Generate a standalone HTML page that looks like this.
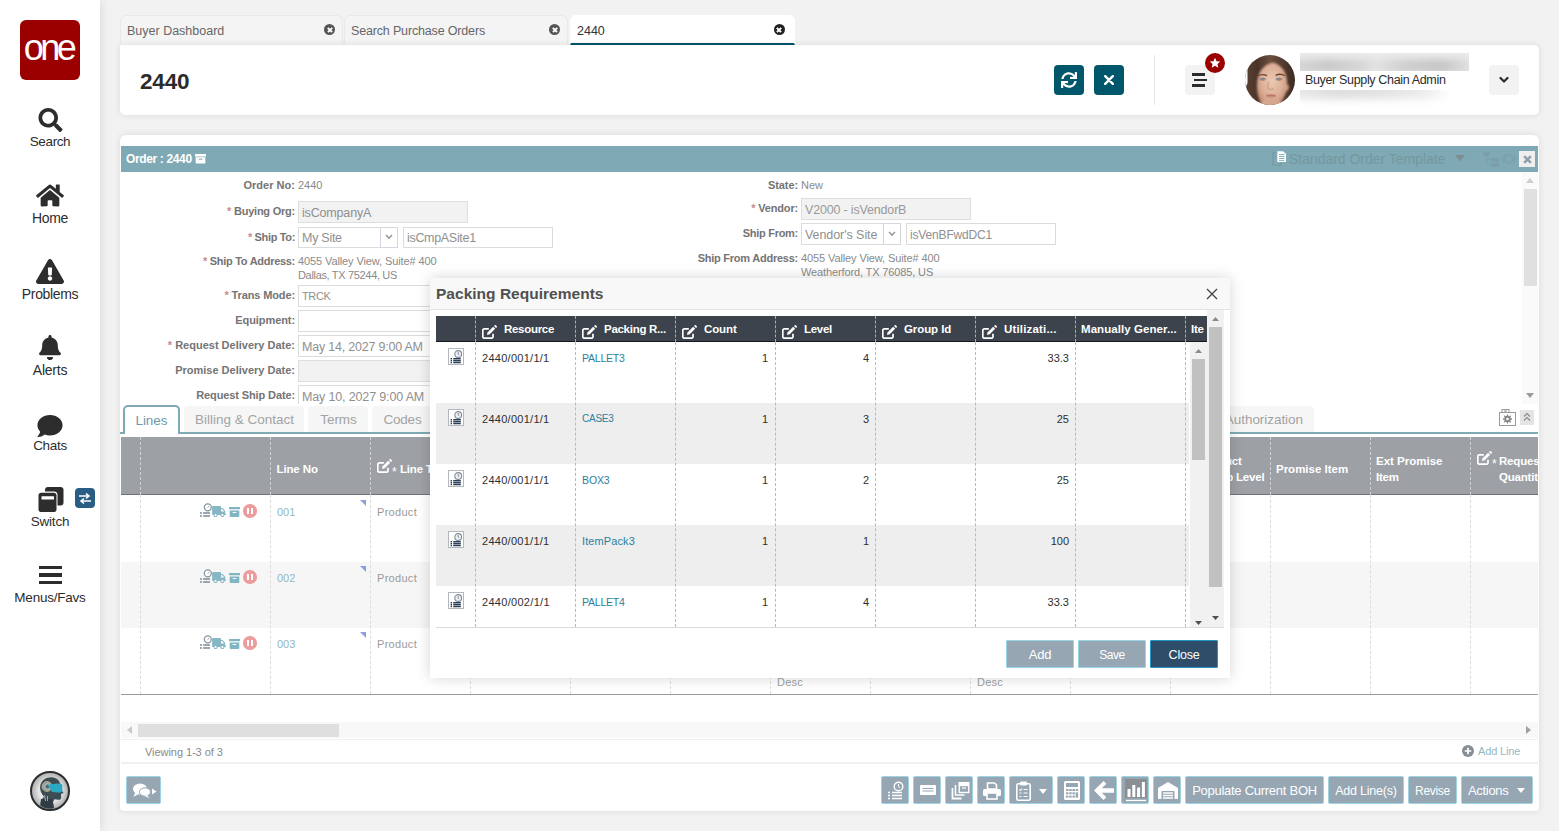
<!DOCTYPE html>
<html lang="en">
<head>
<meta charset="utf-8">
<title>2440</title>
<style>
*{box-sizing:border-box;margin:0;padding:0}
html,body{width:1559px;height:831px;overflow:hidden}
body{background:#f3f2f2;font-family:"Liberation Sans",sans-serif;font-size:12px;color:#333;position:relative}
.abs,.abs>*{position:absolute}
div,span,svg{position:absolute}
.t{white-space:nowrap;line-height:1}
/* sidebar */
#side{left:0;top:0;width:100px;height:831px;background:#fff;box-shadow:0 0 10px rgba(0,0,0,.12)}
#logo{left:20px;top:20px;width:60px;height:60px;background:#9a0000;border-radius:6px}
.nav{left:0;width:100px;text-align:center;font-size:14px;letter-spacing:-.1px;color:#2d2d2d;white-space:nowrap;line-height:16px}
/* tabs */
.tab{top:15px;height:30px;background:#f4f4f4;border-radius:6px 6px 0 0;border:1px solid #e9e9e9;border-bottom:none;font-size:12.5px;color:#666;line-height:30px;padding-left:6px;white-space:nowrap}
.tab.act{background:#fff;color:#333;border-color:#fff;border-bottom:2px solid #00566b}
.tx{width:11px;height:11px;border-radius:50%}
.tx:before,.tx:after{content:"";position:absolute;left:2.500px;top:4.600px;width:6px;height:1.800px;background:#fff;transform:rotate(45deg)}
.tx:after{transform:rotate(-45deg)}
/* header */
#hdr{left:120px;top:45px;width:1419px;height:70px;background:#fff;border-radius:0 5px 5px 5px;box-shadow:0 0 7px rgba(0,0,0,.1)}
.hb{width:30px;height:30px;border-radius:4px;background:#00566b}
.gb{width:30px;height:30px;border-radius:4px;background:#f2f2f2}
/* panel */
#panel{left:120px;top:135px;width:1419px;height:676px;background:#fff;border-radius:6px 6px 4px 4px;box-shadow:0 0 7px rgba(0,0,0,.1)}
.rq{position:static;color:#c98a8a;font-weight:bold}
.bb{background:#96a6b3;border:1px solid #9ed3e3;border-radius:2px}
#modal{left:430px;top:278px;width:800px;height:400px;background:#fff;box-shadow:0 0 13px rgba(0,0,0,.17)}
</style>
</head>
<body>
<!-- SIDEBAR -->
<div id="side"></div>
<div id="logo"><span class="t" style="left:0;top:7.500px;width:60px;text-align:center;font-size:36px;letter-spacing:-3.500px;color:#fff;line-height:40px;text-indent:-3px">one</span></div>
<svg style="left:38px;top:108px" width="25" height="24" viewBox="0 0 512 512"><path fill="#2d2d2d" d="M505 442.700L405.300 343c-4.500-4.500-10.600-7-17-7H372c27.600-35.300 44-79.700 44-128C416 93.100 322.900 0 208 0S0 93.100 0 208s93.100 208 208 208c48.300 0 92.700-16.400 128-44v16.300c0 6.400 2.500 12.500 7 17l99.700 99.700c9.400 9.400 24.600 9.400 33.900 0l28.300-28.300c9.400-9.400 9.400-24.600.1-34zM208 336c-70.700 0-128-57.200-128-128 0-70.700 57.200-128 128-128 70.700 0 128 57.200 128 128 0 70.700-57.200 128-128 128z"/></svg>
<div class="nav" style="top:134px;font-size:13.5px;letter-spacing:-0.38px">Search</div>
<svg style="left:36px;top:184px" width="28" height="23" viewBox="0 0 576 448"><path fill="#2d2d2d" d="M280.400 116.300L96 268.100V432c0 8.800 7.200 16 16 16l112.100-.3c8.800 0 15.900-7.200 15.900-16V336c0-8.800 7.200-16 16-16h64c8.800 0 16 7.200 16 16v95.600c0 8.900 7.100 16.100 16 16.100l112 .3c8.800 0 16-7.200 16-16V268L295.700 116.300c-4.400-3.600-10.800-3.600-15.300 0zM571.600 219.500L488 150.600V12c0-6.600-5.400-12-12-12h-56c-6.600 0-12 5.400-12 12v72.600L318.500 10.900c-17.700-14.600-43.300-14.600-61 0L4.300 219.500c-5.100 4.200-5.800 11.800-1.600 16.900l25.500 31c4.200 5.100 11.800 5.800 16.900 1.600l235.200-193.700c4.400-3.600 10.800-3.600 15.300 0l235.200 193.700c5.100 4.200 12.700 3.500 16.900-1.600l25.500-31c4.200-5.200 3.400-12.800-1.700-16.900z"/></svg>
<div class="nav" style="top:210px;font-size:14px;letter-spacing:-0.34px">Home</div>
<svg style="left:36px;top:259px" width="28" height="25" viewBox="0 0 576 512"><path fill="#2d2d2d" d="M569.500 440c18.500 32-4.700 72-41.600 72H48.100c-37 0-60-40.100-41.600-72L246.400 24c18.500-32 64.700-32 83.200 0l239.900 416zM288 354c-25.400 0-46 20.600-46 46s20.600 46 46 46 46-20.600 46-46-20.600-46-46-46zm-43.700-165.300l7.400 136c.3 6.400 5.600 11.300 12 11.300h48.500c6.400 0 11.600-5 12-11.300l7.400-136c.4-6.900-5.100-12.700-12-12.700h-63.400c-6.900 0-12.400 5.800-12 12.700z"/></svg>
<div class="nav" style="top:286px;font-size:14px;letter-spacing:-0.355px">Problems</div>
<svg style="left:39px;top:335px" width="22" height="25" viewBox="0 0 448 512"><path fill="#2d2d2d" d="M224 512c35.300 0 64-28.700 64-64H160c0 35.300 28.700 64 64 64zm215.400-149.700c-19.300-20.800-55.500-52-55.500-154.300 0-77.700-54.500-139.900-127.900-155.200V32c0-17.700-14.300-32-32-32s-32 14.300-32 32v20.800C118.600 68.100 64.100 130.300 64.100 208c0 102.300-36.200 133.500-55.500 154.300-6 6.400-8.700 14.200-8.600 21.700.1 16.400 13 32 32.100 32h383.800c19.100 0 32-15.600 32.100-32 .1-7.500-2.600-15.300-8.600-21.700z"/></svg>
<div class="nav" style="top:362px;font-size:14px;letter-spacing:-0.233px">Alerts</div>
<svg style="left:37px;top:415px" width="26" height="22" viewBox="0 0 512 448"><path fill="#2d2d2d" d="M256 0C114.600 0 0 93.100 0 208c0 49.600 21.400 95 57 130.700C44.500 389.100 2.700 434 2.200 434.500c-2.200 2.300-2.800 5.700-1.500 8.700S4.800 448 8 448c66.300 0 116-31.800 140.600-51.400 32.700 12.300 69 19.400 107.400 19.400 141.400 0 256-93.100 256-208S397.400 0 256 0z"/></svg>
<div class="nav" style="top:438px;font-size:13.5px;letter-spacing:-0.336px">Chats</div>
<svg style="left:38px;top:487px" width="26" height="26" viewBox="0 0 26 26"><rect x="7" y="0" width="18.500" height="18.500" rx="3" fill="#2d2d2d"/><rect x="-.5" y="4.500" width="20" height="21" rx="3.500" fill="#fff"/><rect x=".5" y="5.700" width="18" height="19.300" rx="2.800" fill="#2d2d2d"/><rect x="3.500" y="9.200" width="12.500" height="3.400" rx=".6" fill="#fff"/></svg>
<div style="left:75px;top:488px;width:20px;height:20px;background:#2a5d84;border-radius:4px"><svg style="left:4px;top:4.500px" width="12" height="11" viewBox="0 0 12 11"><path d="M0 3h9M7 .5L10 3 7 5.500M12 8H3M5 5.500L2 8l3 2.500" stroke="#fff" stroke-width="1.500" fill="none"/></svg></div>
<div class="nav" style="top:514px;font-size:13.5px;letter-spacing:-0.194px">Switch</div>
<div style="left:38.500px;top:565.500px;width:23px;height:3.600px;background:#2d2d2d"></div>
<div style="left:38.500px;top:573px;width:23px;height:3.600px;background:#2d2d2d"></div>
<div style="left:38.500px;top:580.500px;width:23px;height:3.600px;background:#2d2d2d"></div>
<div class="nav" style="top:590px;font-size:13.5px;letter-spacing:-0.223px">Menus/Favs</div>
<svg style="left:30px;top:771px" width="40" height="40" viewBox="0 0 40 40"><defs><radialGradient id="bg1" cx="50%" cy="50%" r="50%"><stop offset="0" stop-color="#fff"/><stop offset=".6" stop-color="#e4e4e4"/><stop offset="1" stop-color="#a9a9a9"/></radialGradient><clipPath id="cp1"><circle cx="20" cy="20" r="17.500"/></clipPath></defs><circle cx="20" cy="20" r="19" fill="url(#bg1)" stroke="#2a2e30" stroke-width="2"/><g clip-path="url(#cp1)"><path d="M10 38l1-9 3-3-2-3c-3-5-2.500-11 2-14.500 4.500-3.300 12-3 15 1.500 1.500 2.300 2 5 1.800 7.500l2.700 4.500-2.500 1 .2 3c0 2-1 2.800-2.800 2.800l-4-.5-1.400 2.700 1.500 7z" fill="#3b4c53"/><path d="M11 28h11l1 10H10z" fill="#2f3d43"/><circle cx="17" cy="15.500" r="5" fill="#8fa3a8" stroke="#c9b274" stroke-width=".8"/><circle cx="17.500" cy="15.500" r="2.600" fill="#55696f" stroke="#d8dfe0" stroke-width=".7"/><path d="M17.500 13.800l10-1.200c2.500-.3 4.800.2 4.800 1.700v5.500c0 1.500-2 2-4.500 1.800L22 21z" fill="#2ba6c3"/><path d="M14.500 24l1 6M17.500 25v5" stroke="#cfd8da" stroke-width=".7"/></g></svg>

<!-- TABS -->
<div class="tab" style="left:120px;width:223px">Buyer Dashboard</div>
<div class="tab" style="left:344px;width:224px;letter-spacing:-0.162px">Search Purchase Orders</div>
<div class="tab act" style="left:570px;width:225px">2440</div>
<div class="tx" style="left:324px;top:24px;background:#555"></div>
<div class="tx" style="left:549px;top:24px;background:#555"></div>
<div class="tx" style="left:773.500px;top:24px;background:#222"></div>

<!-- HEADER -->
<div id="hdr"></div>
<div class="t" style="left:140px;top:70px;font-size:22.5px;font-weight:bold;color:#2b2b2b;line-height:24px;letter-spacing:-.14px">2440</div>
<div class="hb" style="left:1054px;top:65px"><svg style="left:7px;top:7px" width="16" height="16" viewBox="0 0 512 512"><path fill="#fff" d="M440.650 12.570l4 82.770A247.160 247.160 0 0 0 255.830 8C134.730 8 33.910 94.920 12.290 209.820A12 12 0 0 0 24.090 224h49.050a12 12 0 0 0 11.670-9.260 175.910 175.910 0 0 1 317-56.940l-101.460-4.860a12 12 0 0 0-12.570 12v47.410a12 12 0 0 0 12 12H500a12 12 0 0 0 12-12V12a12 12 0 0 0-12-12h-47.370a12 12 0 0 0-11.980 12.570zM255.830 432a175.610 175.610 0 0 1-146-77.800l101.800 4.870a12 12 0 0 0 12.570-12v-47.400a12 12 0 0 0-12-12H12a12 12 0 0 0-12 12V500a12 12 0 0 0 12 12h47.350a12 12 0 0 0 12-12.600l-4.150-82.570A247.170 247.170 0 0 0 255.830 504c121.110 0 221.930-86.920 243.550-201.820a12 12 0 0 0-11.800-14.180h-49.050a12 12 0 0 0-11.670 9.260A175.860 175.860 0 0 1 255.830 432z"/></svg></div>
<div class="hb" style="left:1094px;top:65px"><svg style="left:10px;top:10px" width="10" height="10" viewBox="0 0 10 10"><path d="M1.200 1.200L8.800 8.800M8.800 1.200L1.200 8.800" stroke="#fff" stroke-width="2.400" stroke-linecap="round"/></svg></div>
<div style="left:1154px;top:55px;width:1px;height:50px;background:#e6e6e6"></div>
<div class="gb" style="left:1185px;top:65px"><div style="left:7px;top:8px;width:13px;height:2.500px;background:#2b2b2b"></div><div style="left:9px;top:13.500px;width:13px;height:2.500px;background:#2b2b2b"></div><div style="left:7px;top:19px;width:13px;height:2.500px;background:#2b2b2b"></div></div>
<div style="left:1205px;top:53px;width:20px;height:20px;border-radius:50%;background:#9a0000"><svg style="left:4px;top:4px" width="12" height="12" viewBox="0 0 24 24"><path fill="#fff" d="M12 1.500l3.100 6.800 7.400.8-5.500 5 1.500 7.300L12 17.700l-6.500 3.700L7 14.100 1.500 9.100l7.400-.8z"/></svg></div>
<svg id="avatar" style="left:1245px;top:55px" width="50" height="50" viewBox="0 0 50 50"><defs><clipPath id="cp2"><circle cx="25" cy="25" r="25"/></clipPath><filter id="bl1" x="-20%" y="-20%" width="140%" height="140%"><feGaussianBlur stdDeviation="1.100"/></filter><filter id="bl2" x="-30%" y="-30%" width="160%" height="160%"><feGaussianBlur stdDeviation=".55"/></filter><radialGradient id="sk" cx="50%" cy="42%" r="62%"><stop offset="0" stop-color="#eccab3"/><stop offset=".6" stop-color="#dcae95"/><stop offset="1" stop-color="#b98368"/></radialGradient><linearGradient id="hr" x1="0" y1="0" x2="1" y2="0"><stop offset="0" stop-color="#5a4134"/><stop offset=".25" stop-color="#4a3329"/><stop offset=".5" stop-color="#6a4e3f"/><stop offset=".8" stop-color="#4f382d"/><stop offset="1" stop-color="#3d2a22"/></linearGradient></defs><g clip-path="url(#cp2)"><rect width="50" height="50" fill="url(#hr)"/><path d="M0 18l2.500-4v14l-2.500 6z" fill="#fff" filter="url(#bl2)"/><g filter="url(#bl1)"><path d="M28 7.500c6 1.500 11 6 13 12.500 2 7 1.500 14-1 20-2 5-5 9-9 12H19c-3-3-5.500-8-6.500-14-1-7-.8-13 1.500-19 2.500-6 8-10.500 14-11.500z" fill="url(#sk)"/><path d="M41 30c1.500-1 3 0 2.800 2-.3 2.500-1.500 4.500-3 5z" fill="#d3a189"/><path d="M13 52c3-3 5-6 6-9l14 0c1 3 4 6 8 9z" fill="#d7a68e"/></g><g filter="url(#bl2)"><path d="M12.500 21c3-1.800 6.500-1.800 9.500-.3" stroke="#6b4636" stroke-width="1.300" fill="none"/><path d="M30.500 20.500c3-1.600 6.500-1.600 9.300.3" stroke="#6b4636" stroke-width="1.300" fill="none"/><ellipse cx="17.500" cy="24" rx="3.300" ry="1.500" fill="#b58572"/><ellipse cx="34" cy="24" rx="3.300" ry="1.500" fill="#b58572"/><ellipse cx="17.800" cy="24.200" rx="1.700" ry="1.200" fill="#6d8da6"/><ellipse cx="33.800" cy="24.200" rx="1.700" ry="1.200" fill="#6d8da6"/><path d="M23.500 27c-.5 3-1 5-.5 6.500 1 1.200 4.500 1.200 5.500 0" stroke="#c9977e" stroke-width="1.500" fill="none" opacity=".7"/><ellipse cx="26" cy="40.800" rx="5" ry="1.900" fill="#cc8a7e"/><path d="M21.500 40.600h9" stroke="#b06a62" stroke-width=".7"/></g></g></svg>
<div style="left:1300px;top:53px;width:169px;height:18px;overflow:hidden;background:#ebebeb"><div style="left:-10px;top:6px;width:190px;height:14px;filter:blur(3px);background:linear-gradient(90deg,#d9d9d9 0,#c9c9c9 20%,#d6d6d6 38%,#e2e2e2 45%,#cfcfcf 60%,#c6c6c6 80%,#dadada 92%,#f4f4f4 100%)"></div></div>
<div style="left:1300px;top:90px;width:154px;height:19px;overflow:hidden;background:#fff"><div style="left:-10px;top:-8px;width:160px;height:17px;filter:blur(4px);background:linear-gradient(90deg,#e9e9e9 0,#dcdcdc 30%,#e2e2e2 60%,#ececec 85%,#fff 100%)"></div></div>
<div class="t" style="left:1305px;top:72px;font-size:12.500px;color:#2b2b2b;line-height:16px;letter-spacing:-.342px">Buyer Supply Chain Admin</div>
<div class="gb" style="left:1489px;top:65px"><svg style="left:10px;top:11px" width="10" height="8" viewBox="0 0 10 8"><path d="M1.500 2l3.500 3.500L8.500 2" stroke="#2b2b2b" stroke-width="2.200" fill="none" stroke-linecap="round" stroke-linejoin="round"/></svg></div>

<!-- PANEL -->
<div id="panel"></div>
<div style="left:121px;top:146px;width:1417px;height:26px;background:#7fa9b4;"></div>
<div class="t" style="left:126px;top:151.0px;font-size:12.0px;color:#fff;line-height:16px;font-weight:bold;letter-spacing:-0.362px;">Order : 2440</div>
<svg style="left:195px;top:154px" width="11" height="9.500" viewBox="0 0 12 11" preserveAspectRatio="none"><rect x="0" y="0" width="12" height="3" fill="#fff"/><path fill="#fff" d="M.7 3.800h10.600V10a1 1 0 0 1-1 1H1.700a1 1 0 0 1-1-1zM4 5.500v1.200h4V5.500z"/></svg>
<svg style="left:1272px;top:150px" width="15" height="17" viewBox="0 0 15 17"><path d="M4.500 3H1v12h8v-3" stroke="#7a9ca6" stroke-width="1.500" fill="none"/><path fill="#fff" d="M5.300 1.200h5.700l3 2.600v8.300H5.300z"/><path d="M7 4.500h5.500M7 6.500h5.500M7 8.500h5.500M7 10.400h5.500" stroke="#7fa9b4" stroke-width=".9"/></svg>
<div class="t" style="left:1289px;top:151.0px;font-size:14px;color:#74989f;line-height:16px;letter-spacing:-0.028px;">Standard Order Template</div>
<svg style="left:1455px;top:155px" width="10" height="7" viewBox="0 0 10 7"><path d="M0 0h10L5 6.500z" fill="#7f8d90"/></svg>
<svg style="left:1483px;top:151px" width="34" height="16" viewBox="0 0 34 16"><g fill="#7b9fa8"><rect x="0" y="1" width="7" height="4"/><rect x="8" y="7" width="8" height="4"/><rect x="8" y="12" width="8" height="4"/><path d="M3 5v9h5v-1H4V9h4V8H4V5z"/><path d="M26 3c-4 0-7 3-8 5 1 2 4 5 8 5s7-3 8-5c-1-2-4-5-8-5zm0 8a3 3 0 1 1 0-6 3 3 0 0 1 0 6z" opacity=".7"/></g></svg>
<div style="left:1519px;top:151px;width:16px;height:16px;background:#efefef;"></div>
<svg style="left:1522.500px;top:154.500px" width="9" height="9" viewBox="0 0 8 8"><path d="M1 1l6 6M7 1L1 7" stroke="#93a0a9" stroke-width="2.300"/></svg>
<div style="left:1522px;top:172px;width:16px;height:232px;background:#fafafa;"></div>
<div style="left:1524px;top:189px;width:13px;height:97px;background:#e0e0e0;"></div>
<svg style="left:1526px;top:178px" width="8" height="5" viewBox="0 0 8 5"><path d="M0 5h8L4 0z" fill="#cfcfcf"/></svg>
<svg style="left:1526px;top:393px" width="8" height="5" viewBox="0 0 8 5"><path d="M0 0h8L4 5z" fill="#9a9a9a"/></svg>
<div class="t" style="left:75px;top:177px;width:220px;text-align:right;font-size:11px;font-weight:bold;color:#747474;line-height:16px;letter-spacing:0.02px;">Order No:</div>
<div class="t" style="left:298px;top:177.0px;font-size:11px;color:#8a8a8a;line-height:16px;">2440</div>
<div class="t" style="left:75px;top:203px;width:220px;text-align:right;font-size:11px;font-weight:bold;color:#747474;line-height:16px;letter-spacing:-0.23px;"><span class="rq">*</span> Buying Org:</div>
<div style="left:298px;top:201.3px;width:170px;height:21.5px;background:#f2f2f2;border:1px solid #dedede;"></div>
<div class="t" style="left:302px;top:204.5px;font-size:12.5px;color:#8f8f8f;line-height:16px;letter-spacing:-0.167px;">isCompanyA</div>
<div class="t" style="left:75px;top:228.5px;width:220px;text-align:right;font-size:11px;font-weight:bold;color:#747474;line-height:16px;letter-spacing:-0.35px;"><span class="rq">*</span> Ship To:</div>
<div style="left:298px;top:226.5px;width:83px;height:21.5px;background:#fff;border:1px solid #dcdcdc;"></div>
<div style="left:380px;top:226.5px;width:18px;height:21.5px;background:#fff;border:1px solid #d6d6e0;"></div>
<div class="t" style="left:302px;top:229.5px;font-size:12.5px;color:#8f8f8f;line-height:16px;letter-spacing:-0.27px;">My Site</div>
<svg style="left:385px;top:234px" width="8" height="6" viewBox="0 0 8 6"><path d="M1 1l3 3 3-3" stroke="#9a9a9a" stroke-width="1.600" fill="none"/></svg>
<div style="left:403px;top:226.5px;width:150px;height:21.5px;background:#fff;border:1px solid #dcdcdc;"></div>
<div class="t" style="left:407px;top:229.5px;font-size:12.5px;color:#8f8f8f;line-height:16px;letter-spacing:-0.314px;">isCmpASite1</div>
<div class="t" style="left:75px;top:253px;width:220px;text-align:right;font-size:11px;font-weight:bold;color:#747474;line-height:16px;letter-spacing:-0.29px;"><span class="rq">*</span> Ship To Address:</div>
<div class="t" style="left:298px;top:253.0px;font-size:11px;color:#8a8a8a;line-height:16px;letter-spacing:-0.107px;">4055 Valley View, Suite# 400</div>
<div class="t" style="left:298px;top:267.0px;font-size:11px;color:#8a8a8a;line-height:16px;letter-spacing:-0.329px;">Dallas, TX 75244, US</div>
<div class="t" style="left:75px;top:287px;width:220px;text-align:right;font-size:11px;font-weight:bold;color:#747474;line-height:16px;letter-spacing:-0.12px;"><span class="rq">*</span> Trans Mode:</div>
<div style="left:298px;top:285.2px;width:170px;height:21.5px;background:#fff;border:1px solid #dcdcdc;"></div>
<div class="t" style="left:302px;top:288.0px;font-size:11.0px;color:#8f8f8f;line-height:16px;letter-spacing:-0.363px;">TRCK</div>
<div class="t" style="left:75px;top:312px;width:220px;text-align:right;font-size:11px;font-weight:bold;color:#747474;line-height:16px;letter-spacing:-0.08px;">Equipment:</div>
<div style="left:298px;top:310px;width:170px;height:21.5px;background:#fff;border:1px solid #dcdcdc;"></div>
<div class="t" style="left:75px;top:337px;width:220px;text-align:right;font-size:11px;font-weight:bold;color:#747474;line-height:16px;letter-spacing:0.0px;"><span class="rq">*</span> Request Delivery Date:</div>
<div style="left:298px;top:335.2px;width:170px;height:21.5px;background:#fff;border:1px solid #dcdcdc;"></div>
<div class="t" style="left:302px;top:339.0px;font-size:12.5px;color:#8f8f8f;line-height:16px;letter-spacing:-0.215px;">May 14, 2027 9:00 AM</div>
<div class="t" style="left:75px;top:362px;width:220px;text-align:right;font-size:11px;font-weight:bold;color:#747474;line-height:16px;letter-spacing:0.0px;">Promise Delivery Date:</div>
<div style="left:298px;top:360.2px;width:170px;height:21.5px;background:#f2f2f2;border:1px solid #dedede;"></div>
<div class="t" style="left:75px;top:387px;width:220px;text-align:right;font-size:11px;font-weight:bold;color:#747474;line-height:16px;letter-spacing:-0.12px;">Request Ship Date:</div>
<div style="left:298px;top:385.3px;width:170px;height:21.5px;background:#fff;border:1px solid #dcdcdc;"></div>
<div class="t" style="left:302px;top:389.0px;font-size:12.5px;color:#8f8f8f;line-height:16px;letter-spacing:-0.15px;">May 10, 2027 9:00 AM</div>
<div class="t" style="left:578px;top:177px;width:220px;text-align:right;font-size:11px;font-weight:bold;color:#747474;line-height:16px;letter-spacing:-0.09px;">State:</div>
<div class="t" style="left:801px;top:177.0px;font-size:11px;color:#8a8a8a;line-height:16px;">New</div>
<div class="t" style="left:578px;top:200px;width:220px;text-align:right;font-size:11px;font-weight:bold;color:#747474;line-height:16px;letter-spacing:-0.165px;"><span class="rq">*</span> Vendor:</div>
<div style="left:801px;top:198px;width:170px;height:22px;background:#f2f2f2;border:1px solid #dedede;"></div>
<div class="t" style="left:805px;top:201.5px;font-size:12.5px;color:#999;line-height:16px;letter-spacing:-0.174px;">V2000 - isVendorB</div>
<div class="t" style="left:578px;top:225px;width:220px;text-align:right;font-size:11px;font-weight:bold;color:#747474;line-height:16px;letter-spacing:-0.286px;">Ship From:</div>
<div style="left:801px;top:223px;width:83px;height:22px;background:#fff;border:1px solid #dcdcdc;"></div>
<div style="left:883px;top:223px;width:18px;height:22px;background:#fff;border:1px solid #d6d6e0;"></div>
<div class="t" style="left:805px;top:226.5px;font-size:12.5px;color:#8f8f8f;line-height:16px;letter-spacing:-0.068px;">Vendor's Site</div>
<svg style="left:888px;top:231px" width="8" height="6" viewBox="0 0 8 6"><path d="M1 1l3 3 3-3" stroke="#9a9a9a" stroke-width="1.600" fill="none"/></svg>
<div style="left:906px;top:223px;width:150px;height:22px;background:#fff;border:1px solid #dcdcdc;"></div>
<div class="t" style="left:910px;top:226.5px;font-size:12.0px;color:#8f8f8f;line-height:16px;letter-spacing:-0.162px;">isVenBFwdDC1</div>
<div class="t" style="left:578px;top:250px;width:220px;text-align:right;font-size:11px;font-weight:bold;color:#747474;line-height:16px;letter-spacing:-0.245px;">Ship From Address:</div>
<div class="t" style="left:801px;top:250.0px;font-size:11px;color:#8a8a8a;line-height:16px;letter-spacing:-0.107px;">4055 Valley View, Suite# 400</div>
<div class="t" style="left:801px;top:264.0px;font-size:11px;color:#8a8a8a;line-height:16px;letter-spacing:-0.13px;">Weatherford, TX 76085, US</div>
<div style="left:121px;top:404px;width:1417px;height:34px;background:#fff;"></div>
<div style="left:120px;top:432px;width:1418px;height:2px;background:#7fa9b4;"></div>
<div style="left:123px;top:405px;width:57px;height:29px;background:#fff;border:2px solid #7fa9b4;border-bottom:none;border-radius:5px 5px 0 0"></div>
<div style="left:125px;top:432px;width:53px;height:2px;background:#fff;"></div>
<div class="t" style="left:123px;top:412.6px;font-size:13.5px;color:#6c9aa6;line-height:16px;width:57px;text-align:center;letter-spacing:-0.016px;">Lines</div>
<div style="left:184px;top:405.500px;width:120px;height:26.500px;background:#f6f6f6;border-radius:4px 4px 0 0"></div>
<div class="t" style="left:185px;top:411.8px;font-size:13.5px;color:#a3a3a3;line-height:16px;width:119px;text-align:center;letter-spacing:-0.015px;">Billing &amp; Contact</div>
<div style="left:308px;top:405.500px;width:60px;height:26.500px;background:#f6f6f6;border-radius:4px 4px 0 0"></div>
<div class="t" style="left:309px;top:411.8px;font-size:13.5px;color:#a3a3a3;line-height:16px;width:59px;text-align:center;letter-spacing:-0.01px;">Terms</div>
<div style="left:372px;top:405.500px;width:60px;height:26.500px;background:#f6f6f6;border-radius:4px 4px 0 0"></div>
<div class="t" style="left:373px;top:411.8px;font-size:13.5px;color:#a3a3a3;line-height:16px;width:59px;text-align:center;letter-spacing:-0.246px;">Codes</div>
<div style="left:436px;top:405.500px;width:71px;height:26.500px;background:#f6f6f6;border-radius:4px 4px 0 0"></div>
<div class="t" style="left:437px;top:411.8px;font-size:13.5px;color:#a3a3a3;line-height:16px;width:70px;text-align:center;letter-spacing:-0.05px;">Notes</div>
<div style="left:1140px;top:406px;width:174px;height:26px;background:#f6f6f6;border-radius:4px 4px 0 0"></div>
<div class="t" style="left:1103px;top:411.8px;font-size:13.5px;color:#a3a3a3;line-height:16px;width:200px;text-align:right;letter-spacing:-0.05px;">Approval Authorization</div>
<svg style="left:1499px;top:409px" width="17" height="17" viewBox="0 0 17 17"><rect x=".5" y="3.500" width="16" height="13" fill="#fff" stroke="#9a9a9a"/><rect x="3" y=".5" width="3" height="3" fill="none" stroke="#9a9a9a"/><rect x="7" y=".5" width="3" height="3" fill="none" stroke="#9a9a9a"/><circle cx="8.500" cy="10" r="3.200" fill="#888"/><circle cx="8.500" cy="10" r="1.200" fill="#fff"/><path d="M8.500 5.500v9M4 10h9M5.300 6.800l6.400 6.400M11.700 6.800l-6.400 6.400" stroke="#888" stroke-width="1.300"/><circle cx="8.500" cy="10" r="1.300" fill="#fff"/></svg>
<div style="left:1520px;top:410px;width:14px;height:15px;background:#e4e4e4;"></div>
<svg style="left:1523px;top:412px" width="8" height="10" viewBox="0 0 8 10"><path d="M1 4.500l3-3 3 3M1 8.500l3-3 3 3" stroke="#8a8a8a" stroke-width="1.200" fill="none"/></svg>
<div style="left:121px;top:437px;width:1417px;height:58px;background:#9da1a6;"></div>
<div style="left:121px;top:494.2px;width:1417px;height:1.3px;background:#6e7175;"></div>
<div style="left:121px;top:495.5px;width:1417px;height:66.5px;background:#fff;"></div>
<div style="left:121px;top:562px;width:1417px;height:66px;background:#f6f6f6;"></div>
<div style="left:121px;top:628px;width:1417px;height:66px;background:#fff;"></div>
<div style="left:121px;top:694px;width:1417px;height:1.2px;background:#9a9a9a;"></div>
<div style="left:140.0px;top:437px;width:0;height:58px;border-left:1px dashed #d0d2d4"></div>
<div style="left:140.0px;top:495px;width:0;height:199px;border-left:1px dashed #dcdcdc"></div>
<div style="left:270.0px;top:437px;width:0;height:58px;border-left:1px dashed #d0d2d4"></div>
<div style="left:270.0px;top:495px;width:0;height:199px;border-left:1px dashed #dcdcdc"></div>
<div style="left:370.0px;top:437px;width:0;height:58px;border-left:1px dashed #d0d2d4"></div>
<div style="left:370.0px;top:495px;width:0;height:199px;border-left:1px dashed #dcdcdc"></div>
<div style="left:470.0px;top:437px;width:0;height:58px;border-left:1px dashed #d0d2d4"></div>
<div style="left:470.0px;top:495px;width:0;height:199px;border-left:1px dashed #dcdcdc"></div>
<div style="left:570.0px;top:437px;width:0;height:58px;border-left:1px dashed #d0d2d4"></div>
<div style="left:570.0px;top:495px;width:0;height:199px;border-left:1px dashed #dcdcdc"></div>
<div style="left:670.0px;top:437px;width:0;height:58px;border-left:1px dashed #d0d2d4"></div>
<div style="left:670.0px;top:495px;width:0;height:199px;border-left:1px dashed #dcdcdc"></div>
<div style="left:770.0px;top:437px;width:0;height:58px;border-left:1px dashed #d0d2d4"></div>
<div style="left:770.0px;top:495px;width:0;height:199px;border-left:1px dashed #dcdcdc"></div>
<div style="left:870.0px;top:437px;width:0;height:58px;border-left:1px dashed #d0d2d4"></div>
<div style="left:870.0px;top:495px;width:0;height:199px;border-left:1px dashed #dcdcdc"></div>
<div style="left:970.0px;top:437px;width:0;height:58px;border-left:1px dashed #d0d2d4"></div>
<div style="left:970.0px;top:495px;width:0;height:199px;border-left:1px dashed #dcdcdc"></div>
<div style="left:1070.0px;top:437px;width:0;height:58px;border-left:1px dashed #d0d2d4"></div>
<div style="left:1070.0px;top:495px;width:0;height:199px;border-left:1px dashed #dcdcdc"></div>
<div style="left:1170.0px;top:437px;width:0;height:58px;border-left:1px dashed #d0d2d4"></div>
<div style="left:1170.0px;top:495px;width:0;height:199px;border-left:1px dashed #dcdcdc"></div>
<div style="left:1270.0px;top:437px;width:0;height:58px;border-left:1px dashed #d0d2d4"></div>
<div style="left:1270.0px;top:495px;width:0;height:199px;border-left:1px dashed #dcdcdc"></div>
<div style="left:1370.0px;top:437px;width:0;height:58px;border-left:1px dashed #d0d2d4"></div>
<div style="left:1370.0px;top:495px;width:0;height:199px;border-left:1px dashed #dcdcdc"></div>
<div style="left:1470.0px;top:437px;width:0;height:58px;border-left:1px dashed #d0d2d4"></div>
<div style="left:1470.0px;top:495px;width:0;height:199px;border-left:1px dashed #dcdcdc"></div>
<div class="t" style="left:276.5px;top:461.0px;font-size:11.5px;color:#fff;line-height:16px;font-weight:bold;letter-spacing:-0.125px;">Line No</div>
<svg style="left:377px;top:459px" width="15" height="14" viewBox="0 0 15 14"><path d="M6.800 3.800H2.300A1.500 1.500 0 0 0 .8 5.300v6.400a1.500 1.500 0 0 0 1.500 1.500h7.200a1.500 1.500 0 0 0 1.500-1.500V8.800" stroke="#fff" stroke-width="1.700" fill="none"/><path d="M11.200 1.800l2 2L7.700 9.300l-2.800.8.800-2.800z" fill="#fff"/><path d="M12 1l.8-.8a.7.700 0 0 1 1 0l1 1a.7.700 0 0 1 0 1l-.8.800z" fill="#fff"/></svg>
<div class="t" style="left:392px;top:463.5px;font-size:12px;color:#fff;line-height:16px;">*</div>
<div class="t" style="left:400px;top:461.0px;font-size:11.5px;color:#fff;line-height:16px;font-weight:bold;letter-spacing:-0.2px;">Line Type</div>
<div class="t" style="left:1199.5px;top:453.0px;font-size:11.5px;color:#fff;line-height:16px;font-weight:bold;letter-spacing:-0.2px;">Product</div>
<div class="t" style="left:1199.5px;top:469.0px;font-size:11.5px;color:#fff;line-height:16px;font-weight:bold;letter-spacing:-0.2px;">Group Level</div>
<div class="t" style="left:1276px;top:461.0px;font-size:11.5px;color:#fff;line-height:16px;font-weight:bold;letter-spacing:-0.011px;">Promise Item</div>
<div class="t" style="left:1376px;top:453.0px;font-size:11.5px;color:#fff;line-height:16px;font-weight:bold;letter-spacing:0.0px;">Ext Promise</div>
<div class="t" style="left:1376px;top:469.0px;font-size:11.5px;color:#fff;line-height:16px;font-weight:bold;letter-spacing:-0.2px;">Item</div>
<svg style="left:1477px;top:451px" width="15" height="14" viewBox="0 0 15 14"><path d="M6.800 3.800H2.300A1.500 1.500 0 0 0 .8 5.300v6.400a1.500 1.500 0 0 0 1.500 1.500h7.200a1.500 1.500 0 0 0 1.500-1.500V8.800" stroke="#fff" stroke-width="1.700" fill="none"/><path d="M11.200 1.800l2 2L7.700 9.300l-2.800.8.800-2.800z" fill="#fff"/><path d="M12 1l.8-.8a.7.700 0 0 1 1 0l1 1a.7.700 0 0 1 0 1l-.8.800z" fill="#fff"/></svg>
<div class="t" style="left:1492px;top:455.5px;font-size:12px;color:#fff;line-height:16px;">*</div>
<div class="t" style="left:1499px;top:453.0px;font-size:11.5px;color:#fff;line-height:16px;font-weight:bold;letter-spacing:-0.2px;width:39px;overflow:hidden;">Request</div>
<div class="t" style="left:1499px;top:469.0px;font-size:11.5px;color:#fff;line-height:16px;font-weight:bold;letter-spacing:-0.2px;width:39px;overflow:hidden;">Quantity</div>
<svg style="left:200px;top:503px" width="12" height="15" viewBox="0 0 12 15"><path d="M0 10h1.900M3.100 10h6.900M0 13h1.900M3.100 13h6.900" stroke="#7e8b98" stroke-width="1.700"/><circle cx="7.800" cy="4.300" r="3.500" fill="#fff" stroke="#8794a0" stroke-width="1.250"/><path d="M7.800 4.600l1.100-1.600" stroke="#8794a0" stroke-width=".8" fill="none"/></svg>
<svg style="left:212px;top:506px" width="14" height="11" viewBox="0 0 640 512"><path fill="#86b7c4" d="M624 352h-16V243.900c0-12.700-5.100-24.900-14.100-33.900L494 110.100c-9-9-21.200-14.100-33.900-14.100H416V48c0-26.500-21.500-48-48-48H48C21.500 0 0 21.500 0 48v320c0 26.500 21.500 48 48 48h16c0 53 43 96 96 96s96-43 96-96h128c0 53 43 96 96 96s96-43 96-96h48c8.800 0 16-7.200 16-16v-32c0-8.800-7.200-16-16-16zM160 464c-26.500 0-48-21.500-48-48s21.500-48 48-48 48 21.500 48 48-21.500 48-48 48zm320 0c-26.500 0-48-21.500-48-48s21.500-48 48-48 48 21.500 48 48-21.500 48-48 48zm80-208H416V144h44.100l99.900 99.900V256z"/></svg>
<svg style="left:229px;top:507px" width="11" height="10" viewBox="0 0 12 11"><rect x="0" y="0" width="12" height="2.500" fill="#82b5c3"/><path fill="#82b5c3" d="M.7 3.800h10.600V10a1 1 0 0 1-1 1H1.700a1 1 0 0 1-1-1zM4 5.500v1.200h4V5.500z"/></svg>
<div style="left:243px;top:504px;width:13.500px;height:13.500px;border-radius:50%;background:#ec9c9c"><div style="left:4px;top:4px;width:2px;height:5.500px;background:#fff"></div><div style="left:7.500px;top:4px;width:2px;height:5.500px;background:#fff"></div></div>
<div class="t" style="left:277px;top:504.0px;font-size:11px;color:#93b8c2;line-height:16px;">001</div>
<div class="t" style="left:377px;top:504.0px;font-size:11px;color:#9a9a9a;line-height:16px;letter-spacing:0.3px;">Product</div>
<svg style="left:360px;top:499.5px" width="6" height="6" viewBox="0 0 6 6"><path d="M0 0h6v6z" fill="#8b9fe0"/></svg>
<svg style="left:200px;top:569px" width="12" height="15" viewBox="0 0 12 15"><path d="M0 10h1.900M3.100 10h6.900M0 13h1.900M3.100 13h6.900" stroke="#7e8b98" stroke-width="1.700"/><circle cx="7.800" cy="4.300" r="3.500" fill="#fff" stroke="#8794a0" stroke-width="1.250"/><path d="M7.800 4.600l1.100-1.600" stroke="#8794a0" stroke-width=".8" fill="none"/></svg>
<svg style="left:212px;top:572px" width="14" height="11" viewBox="0 0 640 512"><path fill="#86b7c4" d="M624 352h-16V243.900c0-12.700-5.100-24.900-14.100-33.900L494 110.100c-9-9-21.200-14.100-33.900-14.100H416V48c0-26.500-21.500-48-48-48H48C21.500 0 0 21.500 0 48v320c0 26.500 21.500 48 48 48h16c0 53 43 96 96 96s96-43 96-96h128c0 53 43 96 96 96s96-43 96-96h48c8.800 0 16-7.200 16-16v-32c0-8.800-7.200-16-16-16zM160 464c-26.500 0-48-21.500-48-48s21.500-48 48-48 48 21.500 48 48-21.500 48-48 48zm320 0c-26.500 0-48-21.500-48-48s21.500-48 48-48 48 21.500 48 48-21.500 48-48 48zm80-208H416V144h44.100l99.900 99.900V256z"/></svg>
<svg style="left:229px;top:573px" width="11" height="10" viewBox="0 0 12 11"><rect x="0" y="0" width="12" height="2.500" fill="#82b5c3"/><path fill="#82b5c3" d="M.7 3.800h10.600V10a1 1 0 0 1-1 1H1.700a1 1 0 0 1-1-1zM4 5.500v1.200h4V5.500z"/></svg>
<div style="left:243px;top:570px;width:13.500px;height:13.500px;border-radius:50%;background:#ec9c9c"><div style="left:4px;top:4px;width:2px;height:5.500px;background:#fff"></div><div style="left:7.500px;top:4px;width:2px;height:5.500px;background:#fff"></div></div>
<div class="t" style="left:277px;top:570.0px;font-size:11px;color:#93b8c2;line-height:16px;">002</div>
<div class="t" style="left:377px;top:570.0px;font-size:11px;color:#9a9a9a;line-height:16px;letter-spacing:0.3px;">Product</div>
<svg style="left:360px;top:565.5px" width="6" height="6" viewBox="0 0 6 6"><path d="M0 0h6v6z" fill="#8b9fe0"/></svg>
<svg style="left:200px;top:635px" width="12" height="15" viewBox="0 0 12 15"><path d="M0 10h1.900M3.100 10h6.900M0 13h1.900M3.100 13h6.900" stroke="#7e8b98" stroke-width="1.700"/><circle cx="7.800" cy="4.300" r="3.500" fill="#fff" stroke="#8794a0" stroke-width="1.250"/><path d="M7.800 4.600l1.100-1.600" stroke="#8794a0" stroke-width=".8" fill="none"/></svg>
<svg style="left:212px;top:638px" width="14" height="11" viewBox="0 0 640 512"><path fill="#86b7c4" d="M624 352h-16V243.900c0-12.700-5.100-24.900-14.100-33.900L494 110.100c-9-9-21.200-14.100-33.900-14.100H416V48c0-26.500-21.500-48-48-48H48C21.500 0 0 21.500 0 48v320c0 26.500 21.500 48 48 48h16c0 53 43 96 96 96s96-43 96-96h128c0 53 43 96 96 96s96-43 96-96h48c8.800 0 16-7.200 16-16v-32c0-8.800-7.200-16-16-16zM160 464c-26.500 0-48-21.500-48-48s21.500-48 48-48 48 21.500 48 48-21.500 48-48 48zm320 0c-26.500 0-48-21.500-48-48s21.500-48 48-48 48 21.500 48 48-21.500 48-48 48zm80-208H416V144h44.100l99.900 99.900V256z"/></svg>
<svg style="left:229px;top:639px" width="11" height="10" viewBox="0 0 12 11"><rect x="0" y="0" width="12" height="2.500" fill="#82b5c3"/><path fill="#82b5c3" d="M.7 3.800h10.600V10a1 1 0 0 1-1 1H1.700a1 1 0 0 1-1-1zM4 5.500v1.200h4V5.500z"/></svg>
<div style="left:243px;top:636px;width:13.500px;height:13.500px;border-radius:50%;background:#ec9c9c"><div style="left:4px;top:4px;width:2px;height:5.500px;background:#fff"></div><div style="left:7.500px;top:4px;width:2px;height:5.500px;background:#fff"></div></div>
<div class="t" style="left:277px;top:636.0px;font-size:11px;color:#93b8c2;line-height:16px;">003</div>
<div class="t" style="left:377px;top:636.0px;font-size:11px;color:#9a9a9a;line-height:16px;letter-spacing:0.3px;">Product</div>
<svg style="left:360px;top:631.5px" width="6" height="6" viewBox="0 0 6 6"><path d="M0 0h6v6z" fill="#8b9fe0"/></svg>
<div class="t" style="left:777px;top:674.0px;font-size:11px;color:#a0a0a0;line-height:16px;letter-spacing:0.2px;">Desc</div>
<div class="t" style="left:977px;top:674.0px;font-size:11px;color:#a0a0a0;line-height:16px;letter-spacing:0.2px;">Desc</div>
<div style="left:121px;top:722px;width:1417px;height:16px;background:#f8f8f8;"></div>
<div style="left:138px;top:724px;width:201px;height:13px;background:#dfdfdf;"></div>
<svg style="left:127px;top:726px" width="5" height="8" viewBox="0 0 5 8"><path d="M5 0v8L0 4z" fill="#c8c8c8"/></svg>
<svg style="left:1526px;top:726px" width="5" height="8" viewBox="0 0 5 8"><path d="M0 0v8l5-4z" fill="#a0a0a0"/></svg>
<div style="left:121px;top:739px;width:1417px;height:1px;background:#f0f0f0;"></div>
<div class="t" style="left:145px;top:743.5px;font-size:11px;color:#8a8a8a;line-height:16px;letter-spacing:-0.055px;">Viewing 1-3 of 3</div>
<svg style="left:1462px;top:744.500px" width="12" height="12" viewBox="0 0 11 11"><circle cx="5.500" cy="5.500" r="5.500" fill="#858f95"/><path d="M5.500 2.500v6M2.500 5.500h6" stroke="#fff" stroke-width="1.600"/></svg>
<div class="t" style="left:1478px;top:742.5px;font-size:11px;color:#93b8c2;line-height:16px;letter-spacing:-0.142px;">Add Line</div>
<div style="left:121px;top:762px;width:1417px;height:2px;background:#f0f0f0;"></div>
<!-- TOOLBAR -->
<div class="bb" style="left:126px;top:776px;width:35px;height:28px"><svg style="left:5px;top:6px" width="25" height="16" viewBox="0 0 25 16"><ellipse cx="8" cy="6" rx="7" ry="5.500" fill="#fff"/><path d="M3 10l-1.500 4 5-3z" fill="#fff"/><ellipse cx="13" cy="9" rx="5.500" ry="4.200" fill="#fff" stroke="#96a6b3" stroke-width="1"/><path d="M15 12l2.500 3-5-2z" fill="#fff"/><path d="M20 5.500v6l4.500-3z" fill="#fff"/></svg></div>
<div class="bb" style="left:881px;top:776px;width:28px;height:28px"><svg style="left:6px;top:4px" width="16" height="20" viewBox="0 0 16 20"><circle cx="10.500" cy="5.500" r="4.300" fill="none" stroke="#fff" stroke-width="1.400"/><path d="M10.500 3v2.700l1.500 1" stroke="#fff" stroke-width="1" fill="none"/><path d="M0 11.500h2M4 11.500h10M0 14.500h2M4 14.500h10M0 17.500h2M4 17.500h10" stroke="#fff" stroke-width="1.700"/></svg></div>
<div class="bb" style="left:913px;top:776px;width:28px;height:28px"><svg style="left:6px;top:8px" width="16" height="10" viewBox="0 0 16 10"><rect width="16" height="10" rx="1" fill="#fff"/><path d="M2.500 3.500h11M2.500 6h11" stroke="#96a6b3" stroke-width="1.200"/></svg></div>
<div class="bb" style="left:945px;top:776px;width:28px;height:28px"><svg style="left:5px;top:4px" width="19" height="20" viewBox="0 0 19 20"><path d="M1.500 7v10.500h9" stroke="#fff" stroke-width="1.800" fill="none"/><path d="M4.500 4v10h9" stroke="#fff" stroke-width="1.500" fill="none"/><rect x="7.500" y="1" width="11" height="3" fill="#fff"/><rect x="8.200" y="4.500" width="9.600" height="7" fill="none" stroke="#fff" stroke-width="1.400"/><path d="M11 7h4" stroke="#fff" stroke-width="1.200"/></svg></div>
<div class="bb" style="left:977px;top:776px;width:28px;height:28px"><svg style="left:5px;top:5px" width="18" height="18" viewBox="0 0 18 18"><path d="M4.500 1h7l2 2v4h-9z" fill="none" stroke="#fff" stroke-width="1.600"/><rect x="0" y="7" width="18" height="7" rx="1.500" fill="#fff"/><rect x="4" y="11" width="10" height="6" fill="#96a6b3" stroke="#fff" stroke-width="1.600"/></svg></div>
<div class="bb" style="left:1009px;top:776px;width:44px;height:28px"><svg style="left:6px;top:4px" width="15" height="20" viewBox="0 0 15 20"><rect x=".8" y="2.800" width="13.400" height="16.400" rx="1.500" fill="none" stroke="#fff" stroke-width="1.600"/><rect x="4" y=".5" width="7" height="4" rx="1" fill="#fff"/><path d="M3.500 8.500l1 1 1.500-2M7.500 8.500h4M3.500 12h2M7.500 12h4M3.500 15.500h2M7.500 15.500h4" stroke="#fff" stroke-width="1.100" fill="none"/></svg><svg style="left:29px;top:12px" width="8" height="5" viewBox="0 0 8 5"><path d="M0 0h8L4 5z" fill="#fff"/></svg></div>
<div class="bb" style="left:1057px;top:776px;width:28px;height:28px"><svg style="left:6px;top:4px" width="16" height="19" viewBox="0 0 16 19"><rect width="16" height="19" rx="1.500" fill="#fff"/><rect x="2" y="2" width="12" height="4" fill="#96a6b3"/><g fill="#96a6b3"><rect x="2" y="8" width="2.500" height="2"/><rect x="5.200" y="8" width="2.500" height="2"/><rect x="8.400" y="8" width="2.500" height="2"/><rect x="11.600" y="8" width="2.500" height="2"/><rect x="2" y="11.300" width="2.500" height="2"/><rect x="5.200" y="11.300" width="2.500" height="2"/><rect x="8.400" y="11.300" width="2.500" height="2"/><rect x="11.600" y="11.300" width="2.500" height="5.300"/><rect x="2" y="14.600" width="2.500" height="2"/><rect x="5.200" y="14.600" width="2.500" height="2"/><rect x="8.400" y="14.600" width="2.500" height="2"/></g></svg></div>
<div class="bb" style="left:1089px;top:776px;width:28px;height:28px"><svg style="left:3px;top:3px" width="22" height="21" viewBox="0 0 22 21"><path d="M10.500 1L1 10.500 10.500 20l2.800-2.800-4.500-4.500H21v-4.400H8.800l4.500-4.500z" fill="#fff"/></svg></div>
<div class="bb" style="left:1121px;top:776px;width:28px;height:28px"><svg style="left:3px;top:2px" width="22" height="23" viewBox="0 0 22 23"><path d="M0 0h22v19H0z" fill="#8a8f94"/><g fill="#fff"><rect x="2.500" y="10" width="3" height="8"/><rect x="7.300" y="6" width="3" height="12"/><rect x="12.100" y="8.500" width="3" height="9.500"/><rect x="16.900" y="3" width="3" height="15"/></g><path d="M1 21.500h20" stroke="#fff" stroke-width="1.300"/></svg></div>
<div class="bb" style="left:1153px;top:776px;width:28px;height:28px"><svg style="left:4px;top:5px" width="20" height="17" viewBox="0 0 20 17"><path d="M10 0L0 6v11h3.500V9h13v8H20V6z" fill="#fff"/><path d="M5 11h10M5 13.500h10M5 16h10" stroke="#fff" stroke-width="1.500"/></svg></div>
<div class="bb" style="left:1185px;top:776px;width:139px;height:28px"></div>
<div class="t" style="left:1185px;top:783.0px;font-size:13px;color:#fff;line-height:16px;width:139px;text-align:center;letter-spacing:-0.269px;">Populate Current BOH</div>
<div class="bb" style="left:1328px;top:776px;width:76px;height:28px"></div>
<div class="t" style="left:1328px;top:783.0px;font-size:12.5px;color:#fff;line-height:16px;width:76px;text-align:center;letter-spacing:-0.222px;">Add Line(s)</div>
<div class="bb" style="left:1408px;top:776px;width:49px;height:28px"></div>
<div class="t" style="left:1408px;top:783.0px;font-size:12px;color:#fff;line-height:16px;width:49px;text-align:center;letter-spacing:-0.315px;">Revise</div>
<div class="bb" style="left:1461px;top:776px;width:72px;height:28px"></div>
<div class="t" style="left:1468px;top:783.0px;font-size:13px;color:#fff;line-height:16px;letter-spacing:-0.32px;">Actions</div>
<svg style="left:1517px;top:788px" width="8" height="5" viewBox="0 0 8 5"><path d="M0 0h8L4 5z" fill="#fff"/></svg>
<!-- MODAL -->
<div id="modal"></div>
<div style="left:430px;top:278px;width:800px;height:32px;background:#f8f8f8;border-bottom:1px solid #e3e3e3"></div>
<div class="t" style="left:436px;top:285.5px;font-size:15.5px;color:#505050;line-height:16px;font-weight:bold;letter-spacing:0.02px;line-height:20px;top:283.500px;">Packing Requirements</div>
<svg style="left:1206px;top:288px" width="12" height="12" viewBox="0 0 12 12"><path d="M1 1l10 10M11 1L1 11" stroke="#444" stroke-width="1.300"/></svg>
<div style="left:436px;top:316px;width:771px;height:25.5px;background:#3c434d;"></div>
<div style="left:436px;top:340.5px;width:771px;height:1.3px;background:#15181c;"></div>
<div style="left:436px;top:341.5px;width:753px;height:61.5px;background:#fff;"></div>
<div style="left:436px;top:403px;width:753px;height:61px;background:#eeeeee;"></div>
<div style="left:436px;top:464px;width:753px;height:61px;background:#fff;"></div>
<div style="left:436px;top:525px;width:753px;height:61px;background:#eeeeee;"></div>
<div style="left:436px;top:586px;width:753px;height:41px;background:#fff;"></div>
<div style="left:436px;top:627px;width:786px;height:1px;background:#dcdcdc;"></div>
<div style="left:475.0px;top:316px;width:0;height:25.500px;border-left:1px dashed #a9adb2"></div>
<div style="left:475.0px;top:341.500px;width:0;height:285.500px;border-left:1px dashed #b9b9b9"></div>
<div style="left:575.0px;top:316px;width:0;height:25.500px;border-left:1px dashed #a9adb2"></div>
<div style="left:575.0px;top:341.500px;width:0;height:285.500px;border-left:1px dashed #b9b9b9"></div>
<div style="left:675.0px;top:316px;width:0;height:25.500px;border-left:1px dashed #a9adb2"></div>
<div style="left:675.0px;top:341.500px;width:0;height:285.500px;border-left:1px dashed #b9b9b9"></div>
<div style="left:775.0px;top:316px;width:0;height:25.500px;border-left:1px dashed #a9adb2"></div>
<div style="left:775.0px;top:341.500px;width:0;height:285.500px;border-left:1px dashed #b9b9b9"></div>
<div style="left:875.0px;top:316px;width:0;height:25.500px;border-left:1px dashed #a9adb2"></div>
<div style="left:875.0px;top:341.500px;width:0;height:285.500px;border-left:1px dashed #b9b9b9"></div>
<div style="left:975.0px;top:316px;width:0;height:25.500px;border-left:1px dashed #a9adb2"></div>
<div style="left:975.0px;top:341.500px;width:0;height:285.500px;border-left:1px dashed #b9b9b9"></div>
<div style="left:1075.0px;top:316px;width:0;height:25.500px;border-left:1px dashed #a9adb2"></div>
<div style="left:1075.0px;top:341.500px;width:0;height:285.500px;border-left:1px dashed #b9b9b9"></div>
<div style="left:1185.0px;top:316px;width:0;height:25.500px;border-left:1px dashed #a9adb2"></div>
<div style="left:1185.0px;top:341.500px;width:0;height:285.500px;border-left:1px dashed #b9b9b9"></div>
<svg style="left:482px;top:325px" width="15" height="14" viewBox="0 0 15 14"><path d="M6.800 3.800H2.300A1.500 1.500 0 0 0 .8 5.300v6.400a1.500 1.500 0 0 0 1.500 1.500h7.200a1.500 1.500 0 0 0 1.500-1.500V8.800" stroke="#fff" stroke-width="1.700" fill="none"/><path d="M11.200 1.800l2 2L7.700 9.300l-2.800.8.800-2.800z" fill="#fff"/><path d="M12 1l.8-.8a.7.700 0 0 1 1 0l1 1a.7.700 0 0 1 0 1l-.8.800z" fill="#fff"/></svg>
<div class="t" style="left:504px;top:321.0px;font-size:11.5px;color:#fff;line-height:16px;font-weight:bold;letter-spacing:-0.303px;">Resource</div>
<svg style="left:582px;top:325px" width="15" height="14" viewBox="0 0 15 14"><path d="M6.800 3.800H2.300A1.500 1.500 0 0 0 .8 5.300v6.400a1.500 1.500 0 0 0 1.500 1.500h7.200a1.500 1.500 0 0 0 1.500-1.500V8.800" stroke="#fff" stroke-width="1.700" fill="none"/><path d="M11.200 1.800l2 2L7.700 9.300l-2.800.8.800-2.800z" fill="#fff"/><path d="M12 1l.8-.8a.7.700 0 0 1 1 0l1 1a.7.700 0 0 1 0 1l-.8.800z" fill="#fff"/></svg>
<div class="t" style="left:604px;top:321.0px;font-size:11.5px;color:#fff;line-height:16px;font-weight:bold;letter-spacing:-0.282px;">Packing R...</div>
<svg style="left:682px;top:325px" width="15" height="14" viewBox="0 0 15 14"><path d="M6.800 3.800H2.300A1.500 1.500 0 0 0 .8 5.300v6.400a1.500 1.500 0 0 0 1.500 1.500h7.200a1.500 1.500 0 0 0 1.500-1.500V8.800" stroke="#fff" stroke-width="1.700" fill="none"/><path d="M11.200 1.800l2 2L7.700 9.300l-2.800.8.800-2.800z" fill="#fff"/><path d="M12 1l.8-.8a.7.700 0 0 1 1 0l1 1a.7.700 0 0 1 0 1l-.8.800z" fill="#fff"/></svg>
<div class="t" style="left:704px;top:321.0px;font-size:11.5px;color:#fff;line-height:16px;font-weight:bold;letter-spacing:-0.124px;">Count</div>
<svg style="left:782px;top:325px" width="15" height="14" viewBox="0 0 15 14"><path d="M6.800 3.800H2.300A1.500 1.500 0 0 0 .8 5.300v6.400a1.500 1.500 0 0 0 1.500 1.500h7.200a1.500 1.500 0 0 0 1.500-1.500V8.800" stroke="#fff" stroke-width="1.700" fill="none"/><path d="M11.200 1.800l2 2L7.700 9.300l-2.800.8.800-2.800z" fill="#fff"/><path d="M12 1l.8-.8a.7.700 0 0 1 1 0l1 1a.7.700 0 0 1 0 1l-.8.800z" fill="#fff"/></svg>
<div class="t" style="left:804px;top:321.0px;font-size:11.5px;color:#fff;line-height:16px;font-weight:bold;letter-spacing:-0.3px;">Level</div>
<svg style="left:882px;top:325px" width="15" height="14" viewBox="0 0 15 14"><path d="M6.800 3.800H2.300A1.500 1.500 0 0 0 .8 5.300v6.400a1.500 1.500 0 0 0 1.500 1.500h7.200a1.500 1.500 0 0 0 1.500-1.500V8.800" stroke="#fff" stroke-width="1.700" fill="none"/><path d="M11.200 1.800l2 2L7.700 9.300l-2.800.8.800-2.800z" fill="#fff"/><path d="M12 1l.8-.8a.7.700 0 0 1 1 0l1 1a.7.700 0 0 1 0 1l-.8.800z" fill="#fff"/></svg>
<div class="t" style="left:904px;top:321.0px;font-size:11.5px;color:#fff;line-height:16px;font-weight:bold;letter-spacing:-0.09px;">Group Id</div>
<svg style="left:982px;top:325px" width="15" height="14" viewBox="0 0 15 14"><path d="M6.800 3.800H2.300A1.500 1.500 0 0 0 .8 5.300v6.400a1.500 1.500 0 0 0 1.500 1.500h7.200a1.500 1.500 0 0 0 1.500-1.500V8.800" stroke="#fff" stroke-width="1.700" fill="none"/><path d="M11.200 1.800l2 2L7.700 9.300l-2.800.8.800-2.800z" fill="#fff"/><path d="M12 1l.8-.8a.7.700 0 0 1 1 0l1 1a.7.700 0 0 1 0 1l-.8.800z" fill="#fff"/></svg>
<div class="t" style="left:1004px;top:321.0px;font-size:11.5px;color:#fff;line-height:16px;font-weight:bold;letter-spacing:0.176px;">Utilizati...</div>
<div class="t" style="left:1081px;top:321.0px;font-size:11.5px;color:#fff;line-height:16px;font-weight:bold;letter-spacing:0.065px;">Manually Gener...</div>
<div class="t" style="left:1191px;top:321.0px;font-size:11.5px;color:#fff;line-height:16px;font-weight:bold;letter-spacing:-0.3px;width:16px;overflow:hidden;">Ite</div>
<div style="left:448px;top:348px;width:16px;height:16.500px;border:1px solid #b3b8bd;background:#fff"><svg style="left:0;top:0" width="14" height="14.500" viewBox="0 0 14 14.500"><path d="M1.600 9.700h1.400M4.200 9.700h7.600M1.600 11.600h1.400M4.200 11.600h7.600M1.600 13.500h1.400M4.200 13.500h7.600" stroke="#2b3f57" stroke-width="1.400"/><circle cx="9.200" cy="5" r="3.400" fill="#eef1f4" stroke="#7f8a96" stroke-width="1.100"/><path d="M9.200 3v2.100l1.100.5" stroke="#6f7b88" stroke-width=".8" fill="none"/></svg></div>
<div class="t" style="left:482px;top:350.2px;font-size:11px;color:#2f2f2f;line-height:16px;letter-spacing:0.272px;">2440/001/1/1</div>
<div class="t" style="left:582px;top:350.2px;font-size:10.5px;color:#2b7f9c;line-height:16px;letter-spacing:-0.225px;">PALLET3</div>
<div class="t" style="left:700px;top:350.2px;font-size:11px;color:#2f2f2f;line-height:16px;width:68px;text-align:right;">1</div>
<div class="t" style="left:800px;top:350.2px;font-size:11px;color:#2f2f2f;line-height:16px;width:69px;text-align:right;">4</div>
<div class="t" style="left:1000px;top:350.2px;font-size:11px;color:#2f2f2f;line-height:16px;width:69px;text-align:right;">33.3</div>
<div style="left:448px;top:409px;width:16px;height:16.500px;border:1px solid #b3b8bd;background:#fff"><svg style="left:0;top:0" width="14" height="14.500" viewBox="0 0 14 14.500"><path d="M1.600 9.700h1.400M4.200 9.700h7.600M1.600 11.600h1.400M4.200 11.600h7.600M1.600 13.500h1.400M4.200 13.500h7.600" stroke="#2b3f57" stroke-width="1.400"/><circle cx="9.200" cy="5" r="3.400" fill="#eef1f4" stroke="#7f8a96" stroke-width="1.100"/><path d="M9.200 3v2.100l1.100.5" stroke="#6f7b88" stroke-width=".8" fill="none"/></svg></div>
<div class="t" style="left:482px;top:411.2px;font-size:11px;color:#2f2f2f;line-height:16px;letter-spacing:0.272px;">2440/001/1/1</div>
<div class="t" style="left:582px;top:411.2px;font-size:10px;color:#2b7f9c;line-height:16px;letter-spacing:-0.239px;">CASE3</div>
<div class="t" style="left:700px;top:411.2px;font-size:11px;color:#2f2f2f;line-height:16px;width:68px;text-align:right;">1</div>
<div class="t" style="left:800px;top:411.2px;font-size:11px;color:#2f2f2f;line-height:16px;width:69px;text-align:right;">3</div>
<div class="t" style="left:1000px;top:411.2px;font-size:11px;color:#2f2f2f;line-height:16px;width:69px;text-align:right;">25</div>
<div style="left:448px;top:470px;width:16px;height:16.500px;border:1px solid #b3b8bd;background:#fff"><svg style="left:0;top:0" width="14" height="14.500" viewBox="0 0 14 14.500"><path d="M1.600 9.700h1.400M4.200 9.700h7.600M1.600 11.600h1.400M4.200 11.600h7.600M1.600 13.500h1.400M4.200 13.500h7.600" stroke="#2b3f57" stroke-width="1.400"/><circle cx="9.200" cy="5" r="3.400" fill="#eef1f4" stroke="#7f8a96" stroke-width="1.100"/><path d="M9.200 3v2.100l1.100.5" stroke="#6f7b88" stroke-width=".8" fill="none"/></svg></div>
<div class="t" style="left:482px;top:472.2px;font-size:11px;color:#2f2f2f;line-height:16px;letter-spacing:0.272px;">2440/001/1/1</div>
<div class="t" style="left:582px;top:472.2px;font-size:10.5px;color:#2b7f9c;line-height:16px;letter-spacing:-0.104px;">BOX3</div>
<div class="t" style="left:700px;top:472.2px;font-size:11px;color:#2f2f2f;line-height:16px;width:68px;text-align:right;">1</div>
<div class="t" style="left:800px;top:472.2px;font-size:11px;color:#2f2f2f;line-height:16px;width:69px;text-align:right;">2</div>
<div class="t" style="left:1000px;top:472.2px;font-size:11px;color:#2f2f2f;line-height:16px;width:69px;text-align:right;">25</div>
<div style="left:448px;top:531px;width:16px;height:16.500px;border:1px solid #b3b8bd;background:#fff"><svg style="left:0;top:0" width="14" height="14.500" viewBox="0 0 14 14.500"><path d="M1.600 9.700h1.400M4.200 9.700h7.600M1.600 11.600h1.400M4.200 11.600h7.600M1.600 13.500h1.400M4.200 13.500h7.600" stroke="#2b3f57" stroke-width="1.400"/><circle cx="9.200" cy="5" r="3.400" fill="#eef1f4" stroke="#7f8a96" stroke-width="1.100"/><path d="M9.200 3v2.100l1.100.5" stroke="#6f7b88" stroke-width=".8" fill="none"/></svg></div>
<div class="t" style="left:482px;top:533.2px;font-size:11px;color:#2f2f2f;line-height:16px;letter-spacing:0.272px;">2440/001/1/1</div>
<div class="t" style="left:582px;top:533.2px;font-size:11px;color:#2b7f9c;line-height:16px;letter-spacing:0.103px;">ItemPack3</div>
<div class="t" style="left:700px;top:533.2px;font-size:11px;color:#2f2f2f;line-height:16px;width:68px;text-align:right;">1</div>
<div class="t" style="left:800px;top:533.2px;font-size:11px;color:#2f2f2f;line-height:16px;width:69px;text-align:right;">1</div>
<div class="t" style="left:1000px;top:533.2px;font-size:11px;color:#2f2f2f;line-height:16px;width:69px;text-align:right;">100</div>
<div style="left:448px;top:592px;width:16px;height:16.500px;border:1px solid #b3b8bd;background:#fff"><svg style="left:0;top:0" width="14" height="14.500" viewBox="0 0 14 14.500"><path d="M1.600 9.700h1.400M4.200 9.700h7.600M1.600 11.600h1.400M4.200 11.600h7.600M1.600 13.500h1.400M4.200 13.500h7.600" stroke="#2b3f57" stroke-width="1.400"/><circle cx="9.200" cy="5" r="3.400" fill="#eef1f4" stroke="#7f8a96" stroke-width="1.100"/><path d="M9.200 3v2.100l1.100.5" stroke="#6f7b88" stroke-width=".8" fill="none"/></svg></div>
<div class="t" style="left:482px;top:594.2px;font-size:11px;color:#2f2f2f;line-height:16px;letter-spacing:0.3px;">2440/002/1/1</div>
<div class="t" style="left:582px;top:594.2px;font-size:10.5px;color:#2b7f9c;line-height:16px;letter-spacing:-0.225px;">PALLET4</div>
<div class="t" style="left:700px;top:594.2px;font-size:11px;color:#2f2f2f;line-height:16px;width:68px;text-align:right;">1</div>
<div class="t" style="left:800px;top:594.2px;font-size:11px;color:#2f2f2f;line-height:16px;width:69px;text-align:right;">4</div>
<div class="t" style="left:1000px;top:594.2px;font-size:11px;color:#2f2f2f;line-height:16px;width:69px;text-align:right;">33.3</div>
<div style="left:1190px;top:341.5px;width:17px;height:285.5px;background:#f1f1f1;"></div>
<div style="left:1192px;top:358.5px;width:13px;height:101.5px;background:#c1c1c1;"></div>
<svg style="left:1195px;top:349px" width="7" height="4" viewBox="0 0 7 4"><path d="M0 4h7L3.500 0z" fill="#8a8a8a"/></svg>
<svg style="left:1195px;top:621px" width="7" height="4" viewBox="0 0 7 4"><path d="M0 0h7L3.500 4z" fill="#505050"/></svg>
<div style="left:1207px;top:309.5px;width:17px;height:318px;background:#f1f1f1;"></div>
<div style="left:1209px;top:327px;width:12.8px;height:260px;background:#c1c1c1;"></div>
<div style="left:436px;top:627px;width:788px;height:1px;background:#dcdcdc;"></div>
<svg style="left:1212px;top:317px" width="7" height="4" viewBox="0 0 7 4"><path d="M0 4h7L3.500 0z" fill="#8a8a8a"/></svg>
<svg style="left:1212px;top:616px" width="7" height="4" viewBox="0 0 7 4"><path d="M0 0h7L3.500 4z" fill="#505050"/></svg>
<div style="left:1006px;top:640px;width:68px;height:28px;background:#96a6b3;border:1px solid #98d3e6;border-radius:1px"></div>
<div class="t" style="left:1006px;top:646.5px;font-size:13px;color:#fff;line-height:16px;width:68px;text-align:center;letter-spacing:-0.28px;">Add</div>
<div style="left:1078px;top:640px;width:68px;height:28px;background:#96a6b3;border:1px solid #98d3e6;border-radius:1px"></div>
<div class="t" style="left:1078px;top:646.5px;font-size:12px;color:#fff;line-height:16px;width:68px;text-align:center;letter-spacing:-0.415px;">Save</div>
<div style="left:1150px;top:640px;width:68px;height:28px;background:#2d4d68;border:1px solid #2596c4;border-radius:1px"></div>
<div class="t" style="left:1150px;top:646.5px;font-size:12.5px;color:#fff;line-height:16px;width:68px;text-align:center;letter-spacing:-0.234px;">Close</div>
<!-- END -->

</body>
</html>
